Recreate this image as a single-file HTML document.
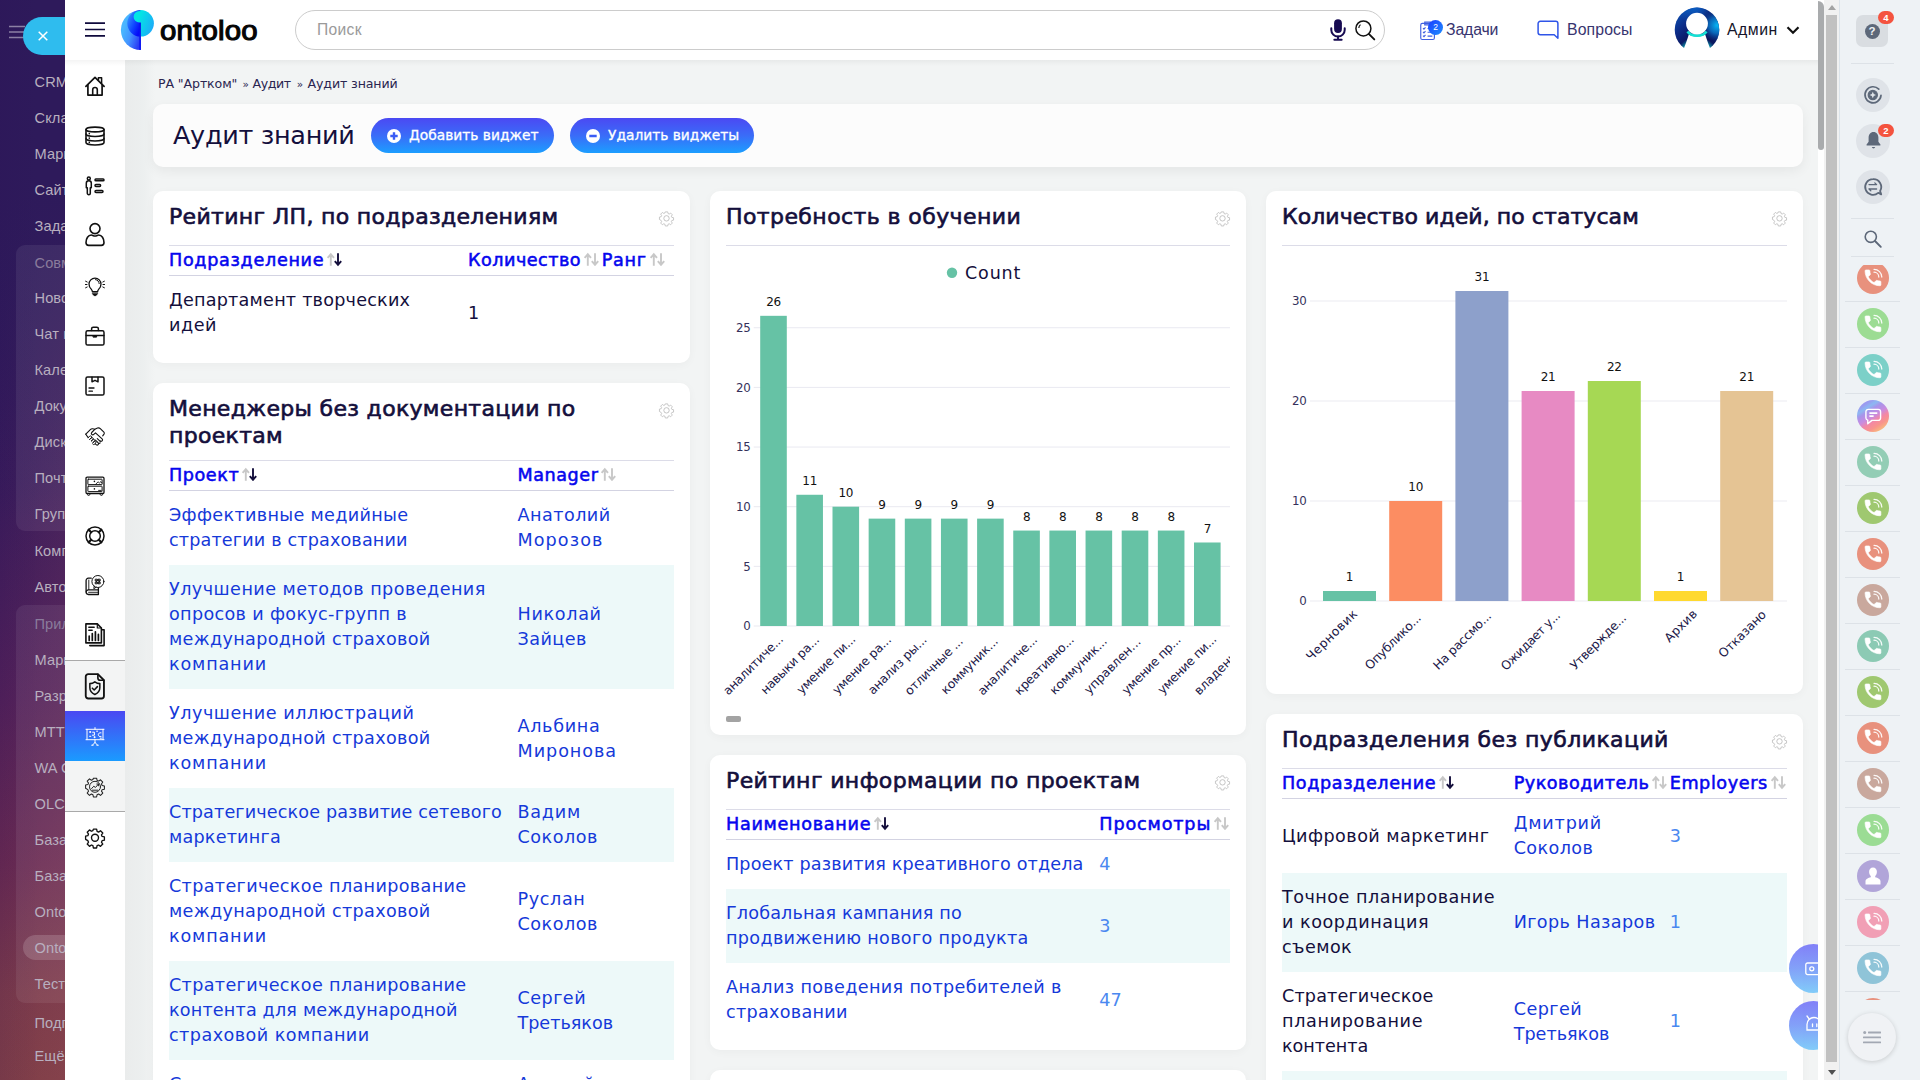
<!DOCTYPE html><html lang="ru"><head><meta charset="utf-8"><title>Аудит знаний</title><style>

*{box-sizing:border-box;margin:0;padding:0}
html,body{width:1920px;height:1080px;overflow:hidden;background:#f2f4f4}
body{font-family:"DejaVu Sans","Liberation Sans",sans-serif;color:#140f3c;position:relative;font-size:17.5px}
.abs{position:absolute}
svg{display:block;overflow:visible}
/* dark sidebar */
#dark{position:absolute;left:0;top:0;width:65px;height:1080px;overflow:hidden;
 background:linear-gradient(180deg,rgba(46,26,91,1) 0%,rgba(46,26,91,1) 18%,rgba(46,26,91,0) 48%),linear-gradient(90deg,rgba(60,20,90,0) 0%,rgba(150,70,90,.05) 45%,rgba(170,90,100,.11) 100%),linear-gradient(180deg,#2e1a5b 0%,#2e1a5b 22%,#3a1c5c 45%,#52215a 65%,#682a52 80%,#7b3b4b 92%,#803f48 100%);
 font-family:"Liberation Sans",sans-serif}
#dark .shade{position:absolute;left:0;top:0;width:65px;height:1080px;background:linear-gradient(90deg,rgba(40,10,80,.10),rgba(255,255,255,.0) 60%)}
#dark .grp{position:absolute;left:16px;width:80px;border-radius:9px;background:rgba(255,255,255,.07)}
#dark .it{position:absolute;left:34.500px;white-space:nowrap;color:#b8afbf;font-size:14.600px;line-height:20px;letter-spacing:.1px}
#dark .it.dim{color:#8a7c9c}
#dark .pill{position:absolute;left:23px;top:17px;width:80px;height:38px;border-radius:19px;background:#2fbcee}
#dark .sel{position:absolute;left:23px;top:935px;width:80px;height:25px;border-radius:13px;background:rgba(255,255,255,.16)}
/* header */
#header{position:absolute;left:65px;top:0;width:1753px;height:60px;background:#fff;z-index:5}
#hshadow{position:absolute;left:65px;top:60px;width:1753px;height:6px;background:linear-gradient(180deg,rgba(0,0,0,.045),rgba(0,0,0,0));z-index:4}
#search{position:absolute;left:230px;top:10px;width:1090px;height:40px;border:1px solid #ccc;border-radius:20px;background:#fff}
#search .ph{position:absolute;left:21px;top:9px;font-family:'Liberation Sans',sans-serif;font-size:15.600px;line-height:20px;color:#9a9a9a}
.hl{position:absolute;top:20px;line-height:20px;font-family:'Liberation Sans',sans-serif;font-size:15.800px;color:#37346f;white-space:nowrap}
/* icon column */
#icons{position:absolute;left:65px;top:60px;width:60px;height:1020px;background:#fff;z-index:3}
#icons .sec{position:absolute;left:0;top:600px;width:60px;height:152px;background:#f3f4f4;border-top:1px solid #a9a9a9;border-bottom:1px solid #a9a9a9}
#icons .act{position:absolute;left:0;top:651px;width:60px;height:50px;background:linear-gradient(180deg,#4a48f2,#1a9bff)}
#icons svg{position:absolute;left:20px;width:20px;height:20px}
/* main */
#main{position:absolute;left:125px;top:60px;width:1693px;height:1020px;background:linear-gradient(90deg,#eaecec 0,#ecefef 18px,#f2f4f4 30px,#f2f4f4 100%);overflow:hidden}
.card{position:absolute;background:#fff;border-radius:10px;box-shadow:0 2px 10px rgba(0,0,0,.035);overflow:hidden}


#right{position:absolute;left:1839px;top:0;width:81px;height:1080px;background:#eef2f5;box-shadow:inset 1px 0 0 #dbe3ea;z-index:7}
#right .sep{position:absolute;height:1px;background:#dde2e7}
#right .badge{position:absolute;width:16px;height:13px;border-radius:6.500px;background:#f4533f;color:#fff;font:bold 9.500px/13.500px "Liberation Sans",sans-serif;text-align:center}
#right .ct{position:absolute;left:18px;width:32px;height:32px;border-radius:16px}
#itrack{position:absolute;left:1818px;top:0;width:6px;height:1080px;background:#fff;z-index:8}
#ithumb{position:absolute;left:1818px;top:1px;width:6px;height:149px;border-radius:0 6px 3px 3px;background:#a9abad;z-index:9}
#otrack{position:absolute;left:1824px;top:0;width:15px;height:1080px;background:#f1f1f1;z-index:8}
#othumb{position:absolute;left:1826px;top:15px;width:11px;height:1047px;background:#c1c1c1;z-index:9}
.fb{position:absolute;left:0;width:49px;height:49px;border-radius:25px;background:linear-gradient(180deg,#7c7af8 0%,#7c9cf8 50%,#7ccaf9 100%);opacity:.95}


.bc{position:absolute;left:0;font-family:'DejaVu Sans',sans-serif;font-size:12.600px;line-height:20px;color:#2a2550;white-space:nowrap}
.bc i{font-style:normal;margin:0 3px;font-size:12px}
.tcard{background:#fcfcfc;box-shadow:0 4px 12px rgba(0,0,0,.06)}
.ptitle{position:absolute;left:20px;top:14px;font-size:25.500px;line-height:34px;white-space:nowrap;color:#140f3c}
.btn{position:absolute;top:14px;height:35px;border-radius:18px;background:linear-gradient(180deg,#4b49f3 0%,#3a6cf8 50%,#1c9eff 100%);color:#fff;white-space:nowrap}
.btn svg{position:absolute;left:16px;top:10.500px}
.btn>span{position:absolute;left:38px;top:7px;font-size:13.800px;line-height:20px;font-family:"DejaVu Sans",sans-serif;-webkit-text-stroke:.3px #fff}
.ctitle{position:absolute;left:16px;top:11.500px;font-family:"DejaVu Sans",sans-serif;font-weight:normal;-webkit-text-stroke:.65px #140f3c;font-size:22px;line-height:27px;white-space:nowrap;color:#140f3c}
.gear{position:absolute;right:16px;top:20px;width:15px;height:15px}
.tbl{position:absolute;left:16px;right:16px;border-top:1px solid #dcdce8}
.thead{position:relative;height:30px;border-bottom:1px solid #d3d3e2}
.th{position:absolute;top:0;height:29px;display:flex;align-items:center;white-space:nowrap;font-family:"DejaVu Sans",sans-serif;font-weight:normal;-webkit-text-stroke:.55px #0606ee;font-size:17.600px;color:#0606ee}
.th>span{position:relative;top:-.5px}
.th .sort{margin-left:3px;margin-top:-2.200px}
.tr{position:relative}
.tr.alt{background:#edf9f9}
.td{position:absolute;top:0;height:100%;display:flex;align-items:center;white-space:nowrap;font-size:17.600px;line-height:25px}
.td>div{position:relative;top:.1px}
.td.dk{color:#140f3c}
.td.lk{color:#1539d9}
.td.nm{color:#4a88f0}

</style></head><body>
<div id="main"></div>
<div class="bc" style="top:73.800px"><span class="abs" style="left:158px"><span style="letter-spacing:-0.12px">РА "Артком"</span></span><span class="abs" style="left:242.500px;font-size:10.500px">»</span><span class="abs" style="left:252.500px"><span style="letter-spacing:-0.41px">Аудит</span></span><span class="abs" style="left:296.700px;font-size:10.500px">»</span><span class="abs" style="left:307.500px"><span style="letter-spacing:-0.12px">Аудит знаний</span></span></div>
<div class="card tcard" style="left:153px;top:104px;width:1650px;height:63px">
<div class="ptitle"><span style="letter-spacing:-0.32px">Аудит знаний</span></div>
<div class="btn" style="left:218px;width:183px"><svg width="14" height="14" viewBox="0 0 14 14"><circle cx="7" cy="7" r="7" fill="#fff"/><path d="M7 3.300v7.400M3.300 7h7.400" stroke="#3a5cf5" stroke-width="2.400"/></svg><span><span>Добавить виджет</span></span></div>
<div class="btn" style="left:417px;width:184px"><svg width="14" height="14" viewBox="0 0 14 14"><circle cx="7" cy="7" r="7" fill="#fff"/><path d="M3.300 7h7.400" stroke="#3a5cf5" stroke-width="2.400"/></svg><span><span>Удалить виджеты</span></span></div>
</div>
<div class="card" style="left:153px;top:191px;width:537px;height:172px"><div class="ctitle"><span style="letter-spacing:0.32px">Рейтинг ЛП, по подразделениям</span></div><svg class="gear" viewBox="0 0 20 20" fill="none" stroke="#b9b9b9" stroke-width="1.100" stroke-linejoin="round"><path d="M8.300 1h3.400l.5 2.400 1.600.7 2-1.400 2.400 2.400-1.400 2 .7 1.600 2.400.5v3.400l-2.400.5-.7 1.600 1.400 2-2.400 2.400-2-1.400-1.600.7-.5 2.400H8.300l-.5-2.400-1.600-.7-2 1.400-2.400-2.400 1.400-2-.7-1.600L.1 11.700V8.300l2.400-.5.7-1.600-1.400-2 2.400-2.400 2 1.400 1.600-.7z" transform="translate(.5 .2) scale(.95)"/><circle cx="10" cy="9.800" r="3.600"/></svg><div class="tbl" style="top:54px"><div class="thead"><div class="th" style="left:0px"><span style="letter-spacing:0.69px">Подразделение</span><svg class="sort" width="15" height="13" viewBox="0 0 15 13" fill="none" stroke-width="1.900"><path d="M3.800 12.800V1.600M.6 4.900 3.800 1.300 7 4.900" stroke="#c8c8c8"/><path d="M11 .2v11.200M7.800 8.100l3.200 3.600 3.200-3.600" stroke="#140f3c"/></svg></div><div class="th" style="left:299px"><span style="letter-spacing:0.49px">Количество</span><svg class="sort" width="15" height="13" viewBox="0 0 15 13" fill="none" stroke-width="1.900"><path d="M3.800 12.800V1.600M.6 4.900 3.800 1.300 7 4.900" stroke="#c8c8c8"/><path d="M11 .2v11.200M7.800 8.100l3.200 3.600 3.200-3.600" stroke="#c8c8c8"/></svg></div><div class="th" style="left:432.7px"><span style="letter-spacing:0.74px">Ранг</span><svg class="sort" width="15" height="13" viewBox="0 0 15 13" fill="none" stroke-width="1.900"><path d="M3.800 12.800V1.600M.6 4.900 3.800 1.300 7 4.900" stroke="#c8c8c8"/><path d="M11 .2v11.200M7.800 8.100l3.200 3.600 3.200-3.600" stroke="#c8c8c8"/></svg></div></div><div class="tr" style="height:74px"><div class="td dk" style="left:0px"><div><span style="letter-spacing:0.22px">Департамент творческих</span><br><span style="letter-spacing:0.55px">идей</span></div></div><div class="td dk" style="left:299px"><div><span style="letter-spacing:0.10px">1</span></div></div><div class="td dk" style="left:432.7px"><div></div></div></div></div></div>
<div class="card" style="left:153px;top:383px;width:537px;height:720px"><div class="ctitle"><span style="letter-spacing:0.32px">Менеджеры без документации по</span><br><span style="letter-spacing:0.30px">проектам</span></div><svg class="gear" viewBox="0 0 20 20" fill="none" stroke="#b9b9b9" stroke-width="1.100" stroke-linejoin="round"><path d="M8.300 1h3.400l.5 2.400 1.600.7 2-1.400 2.400 2.400-1.400 2 .7 1.600 2.400.5v3.400l-2.400.5-.7 1.600 1.400 2-2.400 2.400-2-1.400-1.600.7-.5 2.400H8.300l-.5-2.400-1.600-.7-2 1.400-2.400-2.400 1.400-2-.7-1.600L.1 11.700V8.300l2.400-.5.7-1.600-1.400-2 2.400-2.400 2 1.400 1.600-.7z" transform="translate(.5 .2) scale(.95)"/><circle cx="10" cy="9.800" r="3.600"/></svg><div class="tbl" style="top:77px"><div class="thead"><div class="th" style="left:0px"><span style="letter-spacing:0.57px">Проект</span><svg class="sort" width="15" height="13" viewBox="0 0 15 13" fill="none" stroke-width="1.900"><path d="M3.800 12.800V1.600M.6 4.900 3.800 1.300 7 4.900" stroke="#c8c8c8"/><path d="M11 .2v11.200M7.800 8.100l3.200 3.600 3.200-3.600" stroke="#140f3c"/></svg></div><div class="th" style="left:348.5px"><span style="letter-spacing:0.54px">Manager</span><svg class="sort" width="15" height="13" viewBox="0 0 15 13" fill="none" stroke-width="1.900"><path d="M3.800 12.800V1.600M.6 4.900 3.800 1.300 7 4.900" stroke="#c8c8c8"/><path d="M11 .2v11.200M7.800 8.100l3.200 3.600 3.200-3.600" stroke="#c8c8c8"/></svg></div></div><div class="tr" style="height:74px"><div class="td lk" style="left:0px"><div><span style="letter-spacing:0.32px">Эффективные медийные</span><br><span style="letter-spacing:0.15px">стратегии в страховании</span></div></div><div class="td lk" style="left:348.5px"><div><span style="letter-spacing:0.46px">Анатолий</span><br><span style="letter-spacing:1.08px">Морозов</span></div></div></div><div class="tr alt" style="height:124px"><div class="td lk" style="left:0px"><div><span style="letter-spacing:0.45px">Улучшение методов проведения</span><br><span style="letter-spacing:0.33px">опросов и фокус-групп в</span><br><span style="letter-spacing:0.34px">международной страховой</span><br><span style="letter-spacing:0.83px">компании</span></div></div><div class="td lk" style="left:348.5px"><div><span style="letter-spacing:0.67px">Николай</span><br><span style="letter-spacing:0.42px">Зайцев</span></div></div></div><div class="tr" style="height:99px"><div class="td lk" style="left:0px"><div><span style="letter-spacing:0.52px">Улучшение иллюстраций</span><br><span style="letter-spacing:0.34px">международной страховой</span><br><span style="letter-spacing:0.83px">компании</span></div></div><div class="td lk" style="left:348.5px"><div><span style="letter-spacing:0.67px">Альбина</span><br><span style="letter-spacing:0.95px">Миронова</span></div></div></div><div class="tr alt" style="height:74px"><div class="td lk" style="left:0px"><div><span style="letter-spacing:0.13px">Стратегическое развитие сетевого</span><br><span style="letter-spacing:0.20px">маркетинга</span></div></div><div class="td lk" style="left:348.5px"><div><span style="letter-spacing:0.74px">Вадим</span><br><span style="letter-spacing:0.52px">Соколов</span></div></div></div><div class="tr" style="height:99px"><div class="td lk" style="left:0px"><div><span style="letter-spacing:0.34px">Стратегическое планирование</span><br><span style="letter-spacing:0.34px">международной страховой</span><br><span style="letter-spacing:0.83px">компании</span></div></div><div class="td lk" style="left:348.5px"><div><span style="letter-spacing:0.63px">Руслан</span><br><span style="letter-spacing:0.52px">Соколов</span></div></div></div><div class="tr alt" style="height:99px"><div class="td lk" style="left:0px"><div><span style="letter-spacing:0.34px">Стратегическое планирование</span><br><span style="letter-spacing:0.17px">контента для международной</span><br><span style="letter-spacing:0.45px">страховой компании</span></div></div><div class="td lk" style="left:348.5px"><div><span style="letter-spacing:0.46px">Сергей</span><br><span style="letter-spacing:-0.02px">Третьяков</span></div></div></div><div class="tr" style="height:74px"><div class="td lk" style="left:0px"><div><span style="letter-spacing:0.34px">Стратегическое планирование</span><br><span style="letter-spacing:0.10px">видеопроизводства</span></div></div><div class="td lk" style="left:348.5px"><div><span style="letter-spacing:0.10px">Алексей</span><br><span style="letter-spacing:0.10px">Кузнецов</span></div></div></div></div></div>
<div class="card" style="left:710px;top:755px;width:536px;height:295px"><div class="ctitle"><span style="letter-spacing:0.38px">Рейтинг информации по проектам</span></div><svg class="gear" viewBox="0 0 20 20" fill="none" stroke="#b9b9b9" stroke-width="1.100" stroke-linejoin="round"><path d="M8.300 1h3.400l.5 2.400 1.600.7 2-1.400 2.400 2.400-1.400 2 .7 1.600 2.400.5v3.400l-2.400.5-.7 1.600 1.400 2-2.400 2.400-2-1.400-1.600.7-.5 2.400H8.300l-.5-2.400-1.600-.7-2 1.400-2.400-2.400 1.400-2-.7-1.600L.1 11.700V8.300l2.400-.5.7-1.600-1.400-2 2.400-2.400 2 1.400 1.600-.7z" transform="translate(.5 .2) scale(.95)"/><circle cx="10" cy="9.800" r="3.600"/></svg><div class="tbl" style="top:54px"><div class="thead"><div class="th" style="left:0px"><span style="letter-spacing:0.71px">Наименование</span><svg class="sort" width="15" height="13" viewBox="0 0 15 13" fill="none" stroke-width="1.900"><path d="M3.800 12.800V1.600M.6 4.900 3.800 1.300 7 4.900" stroke="#c8c8c8"/><path d="M11 .2v11.200M7.800 8.100l3.200 3.600 3.200-3.600" stroke="#140f3c"/></svg></div><div class="th" style="left:373.3px"><span style="letter-spacing:0.85px">Просмотры</span><svg class="sort" width="15" height="13" viewBox="0 0 15 13" fill="none" stroke-width="1.900"><path d="M3.800 12.800V1.600M.6 4.900 3.800 1.300 7 4.900" stroke="#c8c8c8"/><path d="M11 .2v11.200M7.800 8.100l3.200 3.600 3.200-3.600" stroke="#c8c8c8"/></svg></div></div><div class="tr" style="height:49px"><div class="td lk" style="left:0px"><div><span style="letter-spacing:0.14px">Проект развития креативного отдела</span></div></div><div class="td nm" style="left:373.3px"><div><span style="letter-spacing:0.10px">4</span></div></div></div><div class="tr alt" style="height:74px"><div class="td lk" style="left:0px"><div><span style="letter-spacing:0.14px">Глобальная кампания по</span><br><span style="letter-spacing:0.32px">продвижению нового продукта</span></div></div><div class="td nm" style="left:373.3px"><div><span style="letter-spacing:0.10px">3</span></div></div></div><div class="tr" style="height:74px"><div class="td lk" style="left:0px"><div><span style="letter-spacing:0.35px">Анализ поведения потребителей в</span><br><span style="letter-spacing:0.28px">страховании</span></div></div><div class="td nm" style="left:373.3px"><div><span style="letter-spacing:0.10px">47</span></div></div></div></div></div>
<div class="card" style="left:710px;top:1070px;width:536px;height:100px"></div>
<div class="card" style="left:1266px;top:714px;width:537px;height:400px"><div class="ctitle"><span style="letter-spacing:0.42px">Подразделения без публикаций</span></div><svg class="gear" viewBox="0 0 20 20" fill="none" stroke="#b9b9b9" stroke-width="1.100" stroke-linejoin="round"><path d="M8.300 1h3.400l.5 2.400 1.600.7 2-1.400 2.400 2.400-1.400 2 .7 1.600 2.400.5v3.400l-2.400.5-.7 1.600 1.400 2-2.400 2.400-2-1.400-1.600.7-.5 2.400H8.300l-.5-2.400-1.600-.7-2 1.400-2.400-2.400 1.400-2-.7-1.600L.1 11.700V8.300l2.400-.5.7-1.600-1.400-2 2.400-2.400 2 1.400 1.600-.7z" transform="translate(.5 .2) scale(.95)"/><circle cx="10" cy="9.800" r="3.600"/></svg><div class="tbl" style="top:54px"><div class="thead"><div class="th" style="left:0px"><span style="letter-spacing:0.61px">Подразделение</span><svg class="sort" width="15" height="13" viewBox="0 0 15 13" fill="none" stroke-width="1.900"><path d="M3.800 12.800V1.600M.6 4.900 3.800 1.300 7 4.900" stroke="#c8c8c8"/><path d="M11 .2v11.200M7.800 8.100l3.200 3.600 3.200-3.600" stroke="#140f3c"/></svg></div><div class="th" style="left:231.7px"><span style="letter-spacing:0.49px">Руководитель</span><svg class="sort" width="15" height="13" viewBox="0 0 15 13" fill="none" stroke-width="1.900"><path d="M3.800 12.800V1.600M.6 4.900 3.800 1.300 7 4.900" stroke="#c8c8c8"/><path d="M11 .2v11.200M7.800 8.100l3.200 3.600 3.200-3.600" stroke="#c8c8c8"/></svg></div><div class="th" style="left:387.7px"><span style="letter-spacing:0.59px">Employers</span><svg class="sort" width="15" height="13" viewBox="0 0 15 13" fill="none" stroke-width="1.900"><path d="M3.800 12.800V1.600M.6 4.900 3.800 1.300 7 4.900" stroke="#c8c8c8"/><path d="M11 .2v11.200M7.800 8.100l3.200 3.600 3.200-3.600" stroke="#c8c8c8"/></svg></div></div><div class="tr" style="height:74px"><div class="td dk" style="left:0px"><div><span style="letter-spacing:0.45px">Цифровой маркетинг</span></div></div><div class="td lk" style="left:231.7px"><div><span style="letter-spacing:0.81px">Дмитрий</span><br><span style="letter-spacing:0.38px">Соколов</span></div></div><div class="td nm" style="left:387.7px"><div><span style="letter-spacing:0.10px">3</span></div></div></div><div class="tr alt" style="height:99px"><div class="td dk" style="left:0px"><div><span style="letter-spacing:0.48px">Точное планирование</span><br><span style="letter-spacing:0.53px">и координация</span><br><span style="letter-spacing:0.42px">съемок</span></div></div><div class="td lk" style="left:231.7px"><div><span style="letter-spacing:0.38px">Игорь Назаров</span></div></div><div class="td nm" style="left:387.7px"><div><span style="letter-spacing:0.10px">1</span></div></div></div><div class="tr" style="height:99px"><div class="td dk" style="left:0px"><div><span style="letter-spacing:0.15px">Стратегическое</span><br><span style="letter-spacing:0.65px">планирование</span><br><span style="letter-spacing:-0.02px">контента</span></div></div><div class="td lk" style="left:231.7px"><div><span style="letter-spacing:0.42px">Сергей</span><br><span style="letter-spacing:-0.01px">Третьяков</span></div></div><div class="td nm" style="left:387.7px"><div><span style="letter-spacing:0.10px">1</span></div></div></div><div class="tr alt" style="height:74px"><div class="td dk" style="left:0px"><div></div></div><div class="td lk" style="left:231.7px"><div></div></div><div class="td nm" style="left:387.7px"><div></div></div></div></div></div>
<div class="card" style="left:710px;top:191px;width:536px;height:544px"><div class="ctitle"><span style="letter-spacing:0.41px">Потребность в обучении</span></div><svg class="gear" viewBox="0 0 20 20" fill="none" stroke="#b9b9b9" stroke-width="1.100" stroke-linejoin="round"><path d="M8.300 1h3.400l.5 2.400 1.600.7 2-1.400 2.400 2.400-1.400 2 .7 1.600 2.400.5v3.400l-2.400.5-.7 1.600 1.400 2-2.400 2.400-2-1.400-1.600.7-.5 2.400H8.300l-.5-2.400-1.600-.7-2 1.400-2.400-2.400 1.400-2-.7-1.600L.1 11.700V8.300l2.400-.5.7-1.600-1.400-2 2.400-2.400 2 1.400 1.600-.7z" transform="translate(.5 .2) scale(.95)"/><circle cx="10" cy="9.800" r="3.600"/></svg><div class="tbl" style="top:54px"></div><svg class="abs" style="left:0;top:0" width="536" height="544" viewBox="710 191 536 544" font-family="DejaVu Sans, Liberation Sans, sans-serif"><defs><clipPath id="c1clip"><rect x="712" y="250" width="518" height="460"/></clipPath></defs><circle cx="952" cy="272.800" r="5.200" fill="#66c2a5"/><text x="965" y="279" font-size="17.500" fill="#140f3c" letter-spacing=".85">Count</text><rect x="753.700" y="625.50" width="476.300" height="1" fill="#e9e9f1"/><text x="750.500" y="630.40" font-size="11.800" text-anchor="end" fill="#34305a" letter-spacing="-.2">0</text><rect x="753.700" y="565.85" width="476.300" height="1" fill="#e9e9f1"/><text x="750.500" y="570.75" font-size="11.800" text-anchor="end" fill="#34305a" letter-spacing="-.2">5</text><rect x="753.700" y="506.20" width="476.300" height="1" fill="#e9e9f1"/><text x="750.500" y="511.10" font-size="11.800" text-anchor="end" fill="#34305a" letter-spacing="-.2">10</text><rect x="753.700" y="446.55" width="476.300" height="1" fill="#e9e9f1"/><text x="750.500" y="451.45" font-size="11.800" text-anchor="end" fill="#34305a" letter-spacing="-.2">15</text><rect x="753.700" y="386.90" width="476.300" height="1" fill="#e9e9f1"/><text x="750.500" y="391.80" font-size="11.800" text-anchor="end" fill="#34305a" letter-spacing="-.2">20</text><rect x="753.700" y="327.25" width="476.300" height="1" fill="#e9e9f1"/><text x="750.500" y="332.15" font-size="11.800" text-anchor="end" fill="#34305a" letter-spacing="-.2">25</text><g clip-path="url(#c1clip)"><rect x="760.20" y="315.82" width="26.600" height="310.18" fill="#66c2a5"/><text x="773.50" y="306.22" font-size="12" text-anchor="middle" fill="#111" letter-spacing="-.3">26</text><text x="784.00" y="640.00" font-size="12.300" text-anchor="end" fill="#1c1848" textLength="78.72" lengthAdjust="spacing" transform="rotate(-45 784.00 640.00)">аналитиче...</text><rect x="796.35" y="494.77" width="26.600" height="131.23" fill="#66c2a5"/><text x="809.65" y="485.17" font-size="12" text-anchor="middle" fill="#111" letter-spacing="-.3">11</text><text x="820.15" y="640.50" font-size="12.300" text-anchor="end" fill="#1c1848" textLength="76.94" lengthAdjust="spacing" transform="rotate(-45 820.15 640.50)">навыки ра...</text><rect x="832.50" y="506.70" width="26.600" height="119.30" fill="#66c2a5"/><text x="845.80" y="497.10" font-size="12" text-anchor="middle" fill="#111" letter-spacing="-.3">10</text><text x="856.30" y="640.00" font-size="12.300" text-anchor="end" fill="#1c1848" textLength="77.30" lengthAdjust="spacing" transform="rotate(-45 856.30 640.00)">умение пи...</text><rect x="868.65" y="518.63" width="26.600" height="107.37" fill="#66c2a5"/><text x="881.95" y="509.03" font-size="12" text-anchor="middle" fill="#111" letter-spacing="-.3">9</text><text x="891.95" y="640.50" font-size="12.300" text-anchor="end" fill="#1c1848" textLength="76.95" lengthAdjust="spacing" transform="rotate(-45 891.95 640.50)">умение ра...</text><rect x="904.80" y="518.63" width="26.600" height="107.37" fill="#66c2a5"/><text x="918.10" y="509.03" font-size="12" text-anchor="middle" fill="#111" letter-spacing="-.3">9</text><text x="927.60" y="640.50" font-size="12.300" text-anchor="end" fill="#1c1848" textLength="77.28" lengthAdjust="spacing" transform="rotate(-45 927.60 640.50)">анализ ры...</text><rect x="940.95" y="518.63" width="26.600" height="107.37" fill="#66c2a5"/><text x="954.25" y="509.03" font-size="12" text-anchor="middle" fill="#111" letter-spacing="-.3">9</text><text x="963.75" y="642.00" font-size="12.300" text-anchor="end" fill="#1c1848" textLength="76.23" lengthAdjust="spacing" transform="rotate(-45 963.75 642.00)">отличные ...</text><rect x="977.10" y="518.63" width="26.600" height="107.37" fill="#66c2a5"/><text x="990.40" y="509.03" font-size="12" text-anchor="middle" fill="#111" letter-spacing="-.3">9</text><text x="998.90" y="642.00" font-size="12.300" text-anchor="end" fill="#1c1848" textLength="74.81" lengthAdjust="spacing" transform="rotate(-45 998.90 642.00)">коммуник...</text><rect x="1013.25" y="530.56" width="26.600" height="95.44" fill="#66c2a5"/><text x="1026.55" y="520.96" font-size="12" text-anchor="middle" fill="#111" letter-spacing="-.3">8</text><text x="1038.05" y="640.50" font-size="12.300" text-anchor="end" fill="#1c1848" textLength="78.35" lengthAdjust="spacing" transform="rotate(-45 1038.05 640.50)">аналитиче...</text><rect x="1049.40" y="530.56" width="26.600" height="95.44" fill="#66c2a5"/><text x="1062.70" y="520.96" font-size="12" text-anchor="middle" fill="#111" letter-spacing="-.3">8</text><text x="1074.70" y="640.50" font-size="12.300" text-anchor="end" fill="#1c1848" textLength="78.00" lengthAdjust="spacing" transform="rotate(-45 1074.70 640.50)">креативно...</text><rect x="1085.55" y="530.56" width="26.600" height="95.44" fill="#66c2a5"/><text x="1098.85" y="520.96" font-size="12" text-anchor="middle" fill="#111" letter-spacing="-.3">8</text><text x="1107.85" y="642.00" font-size="12.300" text-anchor="end" fill="#1c1848" textLength="75.17" lengthAdjust="spacing" transform="rotate(-45 1107.85 642.00)">коммуник...</text><rect x="1121.70" y="530.56" width="26.600" height="95.44" fill="#66c2a5"/><text x="1135.00" y="520.96" font-size="12" text-anchor="middle" fill="#111" letter-spacing="-.3">8</text><text x="1141.50" y="642.50" font-size="12.300" text-anchor="end" fill="#1c1848" textLength="73.76" lengthAdjust="spacing" transform="rotate(-45 1141.50 642.50)">управлен...</text><rect x="1157.85" y="530.56" width="26.600" height="95.44" fill="#66c2a5"/><text x="1171.15" y="520.96" font-size="12" text-anchor="middle" fill="#111" letter-spacing="-.3">8</text><text x="1181.65" y="640.50" font-size="12.300" text-anchor="end" fill="#1c1848" textLength="77.30" lengthAdjust="spacing" transform="rotate(-45 1181.65 640.50)">умение пр...</text><rect x="1194.00" y="542.49" width="26.600" height="83.51" fill="#66c2a5"/><text x="1207.30" y="532.89" font-size="12" text-anchor="middle" fill="#111" letter-spacing="-.3">7</text><text x="1217.30" y="640.00" font-size="12.300" text-anchor="end" fill="#1c1848" textLength="77.30" lengthAdjust="spacing" transform="rotate(-45 1217.30 640.00)">умение пи...</text><text x="1254.45" y="640.50" font-size="12.300" text-anchor="end" fill="#1c1848" textLength="78.00" lengthAdjust="spacing" transform="rotate(-45 1254.45 640.50)">владение ...</text></g><rect x="726" y="716" width="15" height="6" rx="2" fill="#a3a3a3"/></svg></div>
<div class="card" style="left:1266px;top:191px;width:537px;height:503px"><div class="ctitle"><span style="letter-spacing:0.07px">Количество идей, по статусам</span></div><svg class="gear" viewBox="0 0 20 20" fill="none" stroke="#b9b9b9" stroke-width="1.100" stroke-linejoin="round"><path d="M8.300 1h3.400l.5 2.400 1.600.7 2-1.400 2.400 2.400-1.400 2 .7 1.600 2.400.5v3.400l-2.400.5-.7 1.600 1.400 2-2.400 2.400-2-1.400-1.600.7-.5 2.400H8.300l-.5-2.400-1.600-.7-2 1.400-2.400-2.400 1.400-2-.7-1.600L.1 11.700V8.300l2.400-.5.7-1.600-1.400-2 2.400-2.400 2 1.400 1.600-.7z" transform="translate(.5 .2) scale(.95)"/><circle cx="10" cy="9.800" r="3.600"/></svg><div class="tbl" style="top:54px"></div><svg class="abs" style="left:0;top:0" width="537" height="503" viewBox="1266 191 537 503" font-family="DejaVu Sans, Liberation Sans, sans-serif"><rect x="1310" y="600.50" width="477" height="1" fill="#ececf2"/><text x="1306.500" y="605.40" font-size="11.800" text-anchor="end" fill="#34305a" letter-spacing="-.2">0</text><rect x="1310" y="500.50" width="477" height="1" fill="#ececf2"/><text x="1306.500" y="505.40" font-size="11.800" text-anchor="end" fill="#34305a" letter-spacing="-.2">10</text><rect x="1310" y="400.50" width="477" height="1" fill="#ececf2"/><text x="1306.500" y="405.40" font-size="11.800" text-anchor="end" fill="#34305a" letter-spacing="-.2">20</text><rect x="1310" y="300.50" width="477" height="1" fill="#ececf2"/><text x="1306.500" y="305.40" font-size="11.800" text-anchor="end" fill="#34305a" letter-spacing="-.2">30</text><rect x="1323.00" y="591.00" width="53" height="10.00" fill="#66c2a5"/><text x="1349.50" y="581.40" font-size="12" text-anchor="middle" fill="#111" letter-spacing="-.3">1</text><text x="1358.00" y="614.70" font-size="12.300" text-anchor="end" fill="#1c1848" textLength="66.21" lengthAdjust="spacing" transform="rotate(-45 1358.00 614.70)">Черновик</text><rect x="1389.20" y="501.00" width="53" height="100.00" fill="#fc8d62"/><text x="1415.70" y="491.40" font-size="12" text-anchor="middle" fill="#111" letter-spacing="-.3">10</text><text x="1421.90" y="618.70" font-size="12.300" text-anchor="end" fill="#1c1848" textLength="73.33" lengthAdjust="spacing" transform="rotate(-45 1421.90 618.70)">Опублико...</text><rect x="1455.40" y="291.00" width="53" height="310.00" fill="#8da0cb"/><text x="1481.90" y="281.40" font-size="12" text-anchor="middle" fill="#111" letter-spacing="-.3">31</text><text x="1492.10" y="616.70" font-size="12.300" text-anchor="end" fill="#1c1848" textLength="76.09" lengthAdjust="spacing" transform="rotate(-45 1492.10 616.70)">На рассмо...</text><rect x="1521.60" y="391.00" width="53" height="210.00" fill="#e78ac3"/><text x="1548.10" y="381.40" font-size="12" text-anchor="middle" fill="#111" letter-spacing="-.3">21</text><text x="1561.10" y="616.20" font-size="12.300" text-anchor="end" fill="#1c1848" textLength="77.85" lengthAdjust="spacing" transform="rotate(-45 1561.10 616.20)">Ожидает у...</text><rect x="1587.80" y="381.00" width="53" height="220.00" fill="#a6d854"/><text x="1614.30" y="371.40" font-size="12" text-anchor="middle" fill="#111" letter-spacing="-.3">22</text><text x="1627.00" y="618.70" font-size="12.300" text-anchor="end" fill="#1c1848" textLength="73.32" lengthAdjust="spacing" transform="rotate(-45 1627.00 618.70)">Утвержде...</text><rect x="1654.00" y="591.00" width="53" height="10.00" fill="#ffd92f"/><text x="1680.50" y="581.40" font-size="12" text-anchor="middle" fill="#111" letter-spacing="-.3">1</text><text x="1697.80" y="614.70" font-size="12.300" text-anchor="end" fill="#1c1848" textLength="40.08" lengthAdjust="spacing" transform="rotate(-45 1697.80 614.70)">Архив</text><rect x="1720.20" y="391.00" width="53" height="210.00" fill="#e5c494"/><text x="1746.70" y="381.40" font-size="12" text-anchor="middle" fill="#111" letter-spacing="-.3">21</text><text x="1766.90" y="615.30" font-size="12.300" text-anchor="end" fill="#1c1848" textLength="61.21" lengthAdjust="spacing" transform="rotate(-45 1766.90 615.30)">Отказано</text></svg></div>
<div id="dark"><div class="shade"></div>
<div class="grp" style="top:245px;height:286px"></div>
<div class="grp" style="top:605px;height:398px"></div>
<div class="sel"></div>
<div class="it" style="top:71.5px">CRM</div>
<div class="it" style="top:107.5px">Склад</div>
<div class="it" style="top:143.5px">Маркетинг</div>
<div class="it" style="top:179.5px">Сайты</div>
<div class="it" style="top:215.5px">Задачи</div>
<div class="it dim" style="top:252.5px">Совместная работа</div>
<div class="it" style="top:287.5px">Новости</div>
<div class="it" style="top:323.5px">Чат и звонки</div>
<div class="it" style="top:359.5px">Календарь</div>
<div class="it" style="top:395.5px">Документы</div>
<div class="it" style="top:431.5px">Диск</div>
<div class="it" style="top:467.5px">Почта</div>
<div class="it" style="top:503.5px">Группы</div>
<div class="it" style="top:540.5px">Компания</div>
<div class="it" style="top:576.5px">Автоматизация</div>
<div class="it dim" style="top:613.5px">Приложения</div>
<div class="it" style="top:649.5px">Маркет</div>
<div class="it" style="top:685.5px">Разработчикам</div>
<div class="it" style="top:721.5px">МТТ</div>
<div class="it" style="top:757.5px">WA Chat</div>
<div class="it" style="top:793.5px">OLChat</div>
<div class="it" style="top:829.5px">База знаний</div>
<div class="it" style="top:865.5px">База данных</div>
<div class="it" style="top:901.5px">Ontoloo</div>
<div class="it" style="top:937.5px">Ontoloo</div>
<div class="it" style="top:973.5px">Тесты</div>
<div class="it" style="top:1012.5px">Подписка</div>
<div class="it" style="top:1045.5px">Ещё</div>
<svg class="abs" style="left:9px;top:25px" width="16" height="14" viewBox="0 0 16 14"><path d="M0 1.500h16M0 7h16M0 12.500h16" stroke="rgba(255,255,255,.45)" stroke-width="1.600"/></svg>
<div class="pill"><svg class="abs" style="left:15px;top:14px" width="10" height="10" viewBox="0 0 10 10"><path d="M.7.7l8.600 8.600M9.300.7.700 9.300" stroke="#fff" stroke-width="1.500"/></svg></div>
</div>
<div id="hshadow"></div><div id="header">
<svg class="abs" style="left:20px;top:22px" width="20" height="15" viewBox="0 0 20 15"><path d="M0 1.200h20M0 7.500h20M0 13.800h20" stroke="#0f0a3c" stroke-width="1.700"/></svg>
<svg class="abs" style="left:55px;top:9px" width="36" height="42" viewBox="0 0 36 42">
<defs><linearGradient id="lg1" gradientUnits="userSpaceOnUse" x1="2" y1="24" x2="20.800" y2="30"><stop offset="0" stop-color="#49b6ff"/><stop offset=".45" stop-color="#4494ff"/><stop offset="1" stop-color="#2a3af4"/></linearGradient>
<linearGradient id="lg2" gradientUnits="userSpaceOnUse" x1="7.500" y1="12" x2="20.800" y2="18"><stop offset="0" stop-color="#2a80ff"/><stop offset=".55" stop-color="#0a3cff"/><stop offset="1" stop-color="#0206f8"/></linearGradient>
<linearGradient id="lg3" gradientUnits="userSpaceOnUse" x1="18" y1="10" x2="34" y2="16"><stop offset="0" stop-color="#02e6e4"/><stop offset="1" stop-color="#1cacf8"/></linearGradient>
<clipPath id="lcl"><rect x="0" y="0" width="20.800" height="42"/></clipPath><clipPath id="lcr"><rect x="20.300" y="0" width="16" height="42"/></clipPath></defs>
<circle cx="20.800" cy="21.100" r="19.900" fill="url(#lg1)" clip-path="url(#lcl)"/>
<circle cx="20.600" cy="14.300" r="13.300" fill="url(#lg2)" clip-path="url(#lcl)" opacity=".93"/>
<circle cx="20.600" cy="14.300" r="13.300" fill="url(#lg3)" clip-path="url(#lcr)"/>
<rect x="19.300" y="13.500" width="1.600" height="27.400" fill="#0a14f2"/>
<circle cx="19.300" cy="7.800" r="5.700" fill="url(#lg3)"/>
</svg>
<div class="abs" style="left:94.500px;top:10.700px;font-family:'Liberation Sans',sans-serif;font-size:27px;line-height:40px;color:#050505;-webkit-text-stroke:1.100px #050505;transform:scaleX(1.09);transform-origin:0 0;white-space:nowrap"><span style="letter-spacing:0.16px">ontoloo</span></div>
<div id="search"><div class="ph"><span style="letter-spacing:0.34px">Поиск</span></div></div>
<svg class="abs" style="left:1265px;top:19px" width="16" height="22" viewBox="0 0 16 22"><rect x="4.100" y=".3" width="7.800" height="13.700" rx="3.900" fill="#170b52"/><path d="M1.300 9.300v1.600a6.700 6.700 0 0 0 13.400 0V9.300" fill="none" stroke="#170b52" stroke-width="2" stroke-linecap="round"/><path d="M8 17.500v3.200M4.300 20.700h7.400" fill="none" stroke="#170b52" stroke-width="1.900" stroke-linecap="round"/></svg>
<svg class="abs" style="left:1290px;top:20px" width="21" height="21" viewBox="0 0 21 21"><circle cx="8.400" cy="8.400" r="7.500" fill="none" stroke="#111" stroke-width="1.500"/><path d="M13.800 13.900l5.500 5.500" stroke="#111" stroke-width="1.900" stroke-linecap="round"/><path d="M3.800 8a4.800 4.800 0 0 1 1.700-3.400" fill="none" stroke="#111" stroke-width="1.200"/></svg>
<svg class="abs" style="left:1355px;top:20px" width="18" height="21" viewBox="0 0 19 21" fill="none" stroke="#3f5fe0" stroke-width="1.200"><rect x=".8" y="3" width="14.400" height="17" rx="1.600"/><path d="M5 3V1.600h6V3M5 3v1.600h6V3"/><path d="M3.200 8l1 1 1.600-1.800M3.200 12l1 1 1.600-1.800M3.200 16l1 1 1.600-1.800M8 8.400h5M8 12.400h5M8 16.400h5"/></svg>
<div class="abs" style="left:1363.100px;top:19.700px;width:15px;height:15px;border-radius:8px;background:linear-gradient(135deg,#1a3cff,#1f8fff);color:#fff;font:8.500px/15px 'Liberation Sans',sans-serif;text-align:center">2</div>
<div class="hl" style="left:1381px;"><span style="letter-spacing:-0.13px">Задачи</span></div>
<svg class="abs" style="left:1472px;top:20px" width="22" height="20" viewBox="0 0 22 20" fill="none" stroke="#2f55e8" stroke-width="1.500" stroke-linejoin="round"><path d="M3.300 1.300h15.400c1.200 0 2.200 1 2.200 2.200v14.700l-3.700-3.400H3.300c-1.200 0-2.200-1-2.200-2.200V3.500c0-1.200 1-2.200 2.200-2.200z"/></svg>
<div class="hl" style="left:1502px;"><span style="letter-spacing:0.12px">Вопросы</span></div>
<svg class="abs" style="left:1608.500px;top:7px" width="46" height="46" viewBox="0 0 46 46"><defs>
<linearGradient id="av0" x1="0" y1="0" x2="1" y2="1"><stop offset="0" stop-color="#0b5cc0"/><stop offset=".3" stop-color="#0c2c88"/><stop offset=".55" stop-color="#0a1258"/><stop offset="1" stop-color="#0b1c66"/></linearGradient>
<radialGradient id="av1" cx=".95" cy=".4" r=".36"><stop offset="0" stop-color="#06b6f4"/><stop offset=".5" stop-color="#0a8ae0" stop-opacity=".7"/><stop offset="1" stop-color="#0a5cc0" stop-opacity="0"/></radialGradient>
<radialGradient id="av2b" cx=".5" cy=".5" r=".5"><stop offset="0" stop-color="#12e6d2"/><stop offset=".62" stop-color="#12e0d0" stop-opacity=".95"/><stop offset="1" stop-color="#10b0c0" stop-opacity="0"/></radialGradient><radialGradient id="av2" cx=".5" cy="1" r=".5"><stop offset="0" stop-color="#12e6d2"/><stop offset=".7" stop-color="#12d8cc" stop-opacity=".75"/><stop offset="1" stop-color="#12c0c0" stop-opacity="0"/></radialGradient>
<radialGradient id="av3" cx=".45" cy="-.05" r=".42"><stop offset="0" stop-color="#0a62c8"/><stop offset="1" stop-color="#0a66cc" stop-opacity="0"/></radialGradient>
<clipPath id="avc"><circle cx="23" cy="22.800" r="22.300"/></clipPath></defs>
<circle cx="23" cy="22.800" r="22.300" fill="url(#av0)"/>
<circle cx="23" cy="22.800" r="22.300" fill="url(#av3)"/>
<circle cx="23" cy="22.800" r="22.300" fill="url(#av1)"/>
<g clip-path="url(#avc)"><ellipse cx="23" cy="46" rx="20" ry="16" fill="url(#av2b)"/></g>
<path d="M14.800 27.400C13 33 11 38.500 9.500 42.500L8 46h30l-1.500-3.500C35 38.500 33 33 31.200 27.400 27 29.800 19 29.800 14.800 27.400z" fill="#fff"/>
<path d="M13.500 24.500c3.500 5.500 15.500 5.500 19 0" fill="none" stroke="#14e0d4" stroke-width="2.600"/>
<circle cx="23" cy="16.600" r="10.900" fill="#fff"/></svg>
<div class="hl" style="left:1662px;color:#15152a;"><span style="letter-spacing:0.53px">Админ</span></div>
<svg class="abs" style="left:1721px;top:26px" width="14" height="9" viewBox="0 0 14 9"><path d="M1.500 1.300 7 6.800l5.500-5.500" fill="none" stroke="#111" stroke-width="2.200"/></svg>
</div>
<div id="icons"><div class="sec"></div><div class="act"></div>
<svg viewBox="0 0 20 20" style="top:15.6px;color:#111" fill="none" stroke="currentColor" stroke-width="1.5" stroke-linecap="round" stroke-linejoin="round" ><path d="M.9 10.400 10 1.300l9.100 9.100" stroke-width="1.700"/><path d="M2.900 8.800v10.300h14.200V8.800" stroke-width="1.700"/><path d="M13.400 4.400V1.700h3.200v5.900" stroke-width="1.500"/><path d="M7.700 18.800v-5a2.300 2.300 0 0 1 4.600 0v5" stroke-width="1.600"/></svg>
<svg viewBox="0 0 20 20" style="top:65.6px;color:#111" fill="none" stroke="currentColor" stroke-width="1.5" stroke-linecap="round" stroke-linejoin="round" ><ellipse cx="10" cy="3.500" rx="9" ry="2.400" stroke-width="1.600"/><path d="M1 3.500v13c0 1.400 4 2.500 9 2.500s9-1.100 9-2.500v-13" stroke-width="1.600"/><path d="M1 8c0 1.400 4 2.500 9 2.500S19 9.400 19 8M1 12.500C1 13.900 5 15 10 15s9-1.100 9-2.500" stroke-width="1.500"/><path d="M4.300 7.600v.1M4.300 12.100v.1M4.300 16.400v.1" stroke-width="1.600"/></svg>
<svg viewBox="0 0 20 20" style="top:115.6px;color:#111" fill="none" stroke="currentColor" stroke-width="1.5" stroke-linecap="round" stroke-linejoin="round" ><circle cx="3.800" cy="2.600" r="1.500"/><path d="M1.300 7.200a2.500 2.500 0 0 1 5 0v4.600h-1v5.400a1.500 1.500 0 0 1-3 0v-5.400h-1z"/><rect x="10" y="3" width="9" height="1.800" rx=".9"/><rect x="10" y="8.600" width="5.600" height="1.800" rx=".9"/><rect x="10" y="14.400" width="8" height="2" rx="1"/></svg>
<svg viewBox="0 0 20 24" style="top:163.4px;height:24px;color:#111" fill="none" stroke="currentColor" stroke-width="1.500" stroke-linecap="round" stroke-linejoin="round"><circle cx="10" cy="5.600" r="5" stroke-width="1.600"/><path d="M1 19.600c0-4.300 2.200-7.600 5.300-7.600 1.100 0 2.100 1 3.700 1s2.600-1 3.700-1c3.100 0 5.300 3.300 5.300 7.600 0 1.800-1.100 2.800-2.700 2.800H3.700C2.100 22.400 1 21.400 1 19.600z" stroke-width="1.600"/></svg>
<svg viewBox="0 0 20 20" style="top:215.6px;color:#111" fill="none" stroke="currentColor" stroke-width="1.5" stroke-linecap="round" stroke-linejoin="round" ><path d="M6.500 13.600C4.900 12.300 4 10.400 4 8.100a6 6 0 0 1 12 0c0 2.300-.9 4.200-2.500 5.500-.5.500-.8 1.200-.8 2H7.300c0-.8-.3-1.500-.8-2z" stroke-width="1.300"/><path d="M7.400 17.100h5.200M8.100 18.600h3.800" stroke-width="1.300"/><path d="M9.200 19.600h1.600" stroke-width="1"/><path d="M10.500 3.600c2.100.3 3.500 1.900 3.700 4" stroke-width="1"/><path d="M.6 5.200l1.600.8M.4 8.500H2M.6 11.800l1.600-.8M19.400 5.200l-1.600.8M19.600 8.500H18M19.400 11.800l-1.600-.8" stroke-width="1"/></svg>
<svg viewBox="0 0 20 20" style="top:265.6px;color:#111" fill="none" stroke="currentColor" stroke-width="1.5" stroke-linecap="round" stroke-linejoin="round" ><rect x="1" y="4.800" width="18" height="14.200" rx="1.600"/><path d="M6.600 4.600V2.800c0-.9.700-1.600 1.600-1.600h3.600c.9 0 1.600.7 1.600 1.600v1.800"/><path d="M1.200 9.600h17.600"/><path d="M8.400 9.800h3.200v1.300H8.400z" fill="currentColor" stroke-width="1"/></svg>
<svg viewBox="0 0 20 20" style="top:315.6px;color:#111" fill="none" stroke="currentColor" stroke-width="1.5" stroke-linecap="round" stroke-linejoin="round" ><rect x="1" y="1" width="18" height="18" rx="1.600"/><path d="M7 1.200v4.600l3-1.500 3 1.500V1.200"/><path d="M4 12h5M4 15.200h3.400" stroke-width="1.300"/></svg>
<svg viewBox="0 0 20 20" style="top:365.6px;color:#111" fill="none" stroke="currentColor" stroke-width="1.5" stroke-linecap="round" stroke-linejoin="round" ><path d="M.8 8.200 5.600 3.400c.6-.6 1.300-.8 2.100-.6l2.100.5 2.700-1.200c1-.4 2-.2 2.800.5l3.600 3.600c.5.500.5 1.300.1 1.900l-1.300 1.800" stroke-width="1.100"/><path d="M.8 8.200l2.400 3.400" stroke-width="1.100"/><path d="M9.800 3.300 6.700 6.500c-.5.600-.5 1.400.1 1.900.6.500 1.400.5 2-.1l1.700-1.500 6.600 6c.6.600.6 1.500 0 2-.5.500-1.400.5-1.900 0" stroke-width="1.100"/><path d="M15.200 16.800c-.5.500-1.400.6-2 0l-1.300-1.200M13.200 16.800c.5.600.5 1.400-.1 1.900-.5.500-1.300.5-1.900 0l-1-.9M12.300 12.600l2.900 2.700M10.400 14.200l2.200 2" stroke-width="1.100"/><path d="M3.200 11.600l1.600-1.400c.5-.4 1.200-.4 1.600.1.400.5.400 1.200-.1 1.600L4.700 13.300M4.700 13.300l1.700-1.400M6.400 11.900c.5-.4 1.200-.4 1.600.1.400.5.400 1.200-.1 1.600l-1.600 1.400M6.300 15l1.600-1.400c.5-.4 1.200-.4 1.600.1.400.5.400 1.200-.1 1.600l-1.600 1.400M7.800 16.700l1.200-1c.5-.4 1.200-.4 1.600.1.400.5.400 1.200-.1 1.600l-1.100.9c-.5.400-1.200.4-1.600-.1" stroke-width="1"/></svg>
<svg viewBox="0 0 20 20" style="top:415.6px;color:#111" fill="none" stroke="currentColor" stroke-width="1.5" stroke-linecap="round" stroke-linejoin="round" ><rect x="1" y="1.200" width="18" height="16.300" rx="1.200" stroke-width="1.300"/><rect x="2.900" y="3.200" width="14.200" height="5.400" rx=".4" stroke-width="1"/><rect x="2.900" y="10.200" width="14.200" height="5.400" rx=".4" stroke-width="1"/><path d="M2.400 17.600v.9c0 .5.400.8.800.8h.8c.5 0 .8-.3.800-.8v-.9M15.200 17.600v.9c0 .5.400.8.800.8h.8c.5 0 .8-.3.800-.8v-.9" stroke-width="1"/><circle cx="9.400" cy="5.400" r=".8" fill="currentColor" stroke="none"/><circle cx="9.400" cy="12.900" r=".8" fill="currentColor" stroke="none"/><path d="M10.600 8.300l2.500-2.500 1.300 1.200 1.500-1.400 1.100 1.300" stroke-width=".9"/><path d="M13.600 14.400h2.600" stroke-width=".9"/></svg>
<svg viewBox="0 0 20 20" style="top:465.6px;color:#111" fill="none" stroke="currentColor" stroke-width="1.5" stroke-linecap="round" stroke-linejoin="round" ><circle cx="10" cy="10" r="9"/><circle cx="10" cy="10" r="5.300"/><path d="M3.700 3.700l2.500 2.500M16.300 3.700l-2.500 2.500M3.700 16.300l2.500-2.500M16.300 16.300l-2.500-2.500" stroke-width="2.200"/></svg>
<svg viewBox="0 0 20 21" style="top:515.0px;height:21px;color:#111" fill="none" stroke="currentColor" stroke-width="1.500" stroke-linecap="round" stroke-linejoin="round"><path d="M6.200 3.200H3.400c-1.300 0-2.300 1-2.300 2.300v11.600c0 1.400 1 2.400 2.300 2.400h10V12.800" stroke-width="1.300"/><path d="M1.200 17c0-1.200 1-2.100 2.200-2.100h9.800" stroke-width="1.100"/><path d="M3.600 17.300h9.600" stroke-width=".9"/><path d="M3.800 5v9.600" stroke-width=".9"/><circle cx="12.900" cy="6.500" r="6" stroke-width="1" fill="#fff"/><path d="M10.600 4.200h1.700v1.700h-1.700zM13.500 4.200h1.700v1.700h-1.700zM10.600 7.100h1.700v1.700h-1.700zM13.500 7.100h1.700v1.700h-1.700z" stroke-width="1"/><path d="M12.300 5h1.200M12.300 8h1.200M11.400 5.900v1.200M14.400 5.900v1.200" stroke-width="1"/><path d="M9.200 11.200l-.4 2.500 2.300-1.400" stroke-width="1"/></svg>
<svg viewBox="0 0 20 24" style="top:563.4px;height:24px;color:#111" fill="none" stroke="currentColor" stroke-width="1.500" stroke-linecap="round" stroke-linejoin="round"><path d="M.9.900h11.400l4.100 4.100V19.900H.9z" stroke-width="1.600" fill="#fff"/><path d="M12.300.9v4.100h4.100" stroke-width="1.200"/><path d="M4.800 22.600h14.300V6.700h-2.400" stroke-width="1.600"/><path d="M3.800 4.300h5.400M3.800 7.200h3.400" stroke-width="1.400"/><path d="M4.200 17.500V13M7.300 17.500V10.600M10.400 17.500V8.800M13.400 17.500V11.400" stroke-width="1.700"/></svg>
<svg viewBox="0 0 20 24" style="top:613px;height:26px;width:21.700px;left:18.700px;color:#111" fill="none" stroke="currentColor" stroke-linecap="round" stroke-linejoin="round"><path d="M1.600 3.400c0-1.300 1-2.300 2.300-2.300h8.900l5.600 5.600v14.500c0 1.300-1 2.300-2.300 2.300H3.900c-1.300 0-2.300-1-2.300-2.300z" stroke-width="1.700"/><path d="M12.800 1.200v3.400c0 1.200.9 2.100 2.100 2.100h3.400" stroke-width="1.500"/><path d="M10 8.200c1.500 1.100 3 1.600 4.600 1.600v3.800c0 2.900-1.600 4.900-4.600 6.200-3-1.300-4.600-3.300-4.600-6.200V9.800c1.600 0 3.100-.5 4.600-1.600z" stroke-width="1.400"/><path d="M7.700 14l1.700 1.700 3-3.100" stroke-width="1.400"/></svg>
<svg viewBox="0 0 20 20" style="top:666px;color:#fff" fill="none" stroke="currentColor" stroke-width="1.5" stroke-linecap="round" stroke-linejoin="round" ><path d="M1 3.300h18M1 13.700h18M2 3.300v10.400M18 3.300v10.400M10 1.600v1.700M10 13.700v2.800M10 16.500l-2.600 2.700M10 16.500l2.600 2.700M8.200 19.200h-1.400M11.800 19.200h1.400" stroke-width="1"/><path d="M4.600 6h1.200M5.200 5.400v1.200M11.600 5.200h1M4.600 10.300h1.200M9 11.200h1.200M9.600 10.600v1.200M15.200 12.200h1.200" stroke-width="1"/><path d="M7.600 6.200h1.800v3h-2M16 6.800c-1.600-.3-2.700.6-2.700 1.900 0 1.300 1.100 2.200 2.700 1.900" stroke-width="1"/></svg>
<svg viewBox="0 0 20 20" style="top:717px;color:#222" fill="none" stroke="currentColor" stroke-width="1.5" stroke-linecap="round" stroke-linejoin="round" ><path d="M8.300 1h3.400l.5 2.400 1.600.7 2-1.400 2.400 2.400-1.400 2 .7 1.600 2.400.5v3.400l-2.400.5-.7 1.600 1.400 2-2.400 2.400-2-1.400-1.600.7-.5 2.400H8.300l-.5-2.400-1.600-.7-2 1.400-2.400-2.400 1.400-2-.7-1.600L.1 11.700V8.300l2.400-.5.7-1.600-1.400-2 2.400-2.400 2 1.400 1.600-.7z" stroke-width="1.100" transform="translate(.5 .2) scale(.95)"/><circle cx="10" cy="9.800" r="5.500" stroke-width="1"/><path d="M6.600 11.600l2.200-2.400 1.600 1.300 3-3.300M11.800 7h1.800v1.800" stroke-width="1"/><path d="M7.200 13.200h5.600" stroke-width="1"/></svg>
<svg viewBox="0 0 20 20" style="top:768px;color:#111" fill="none" stroke="currentColor" stroke-width="1.5" stroke-linecap="round" stroke-linejoin="round" ><path d="M8.300 1h3.400l.5 2.400 1.600.7 2-1.400 2.400 2.400-1.400 2 .7 1.600 2.400.5v3.400l-2.400.5-.7 1.600 1.400 2-2.400 2.400-2-1.400-1.600.7-.5 2.400H8.300l-.5-2.400-1.600-.7-2 1.400-2.400-2.400 1.400-2-.7-1.600L.1 11.700V8.300l2.400-.5.7-1.600-1.400-2 2.400-2.400 2 1.400 1.600-.7z" stroke-width="1.400" transform="translate(.5 .2) scale(.95)"/><circle cx="10" cy="9.800" r="3.500" stroke-width="1.400"/></svg>
</div>
<div id="right">
<div class="abs" style="left:17px;top:15px;width:32px;height:32px;border-radius:7px;background:#d9dde1"></div>
<div class="abs" style="left:25.500px;top:23.500px;width:15px;height:15px;border-radius:8px;background:#5d6879;color:#eef2f5;font:bold 11.500px/15px 'Liberation Sans',sans-serif;text-align:center">?</div>
<div class="badge" style="left:39px;top:11px">4</div>
<div class="sep" style="left:12px;width:43px;top:63px"></div>
<div class="sep" style="left:12px;width:43px;top:218px"></div>
<div class="sep" style="left:12px;width:43px;top:256px"></div>
<div class="abs" style="left:17px;top:78px;width:34px;height:34px;border-radius:17px;background:#dfe3e8"></div>
<div class="abs" style="left:17px;top:124px;width:34px;height:34px;border-radius:17px;background:#dfe3e8"></div>
<div class="abs" style="left:17px;top:170px;width:34px;height:34px;border-radius:17px;background:#dfe3e8"></div>
<svg class="abs" style="left:24.500px;top:86px" width="18" height="18" viewBox="0 0 18 18" fill="none" stroke="#5d6879" stroke-width="1.700" stroke-linecap="round"><path d="M14.800 3.200A8 8 0 1 0 17 9.400"/><circle cx="8.800" cy="9" r="4.600" fill="#5d6879" stroke-width="1.200"/><path d="M8.800 5.800l1 2.200 2.200 1-2.200 1-1 2.200-1-2.200-2.200-1 2.200-1z" fill="#dfe3e8" stroke="none"/></svg>
<svg class="abs" style="left:27px;top:132px" width="15" height="17" viewBox="0 0 15 17"><path d="M7.500 0C4.400 0 2.600 2.500 2.600 5.600v4.200L.6 12.400c-.3.400 0 1 .5 1h12.800c.5 0 .8-.6.500-1l-2-2.600V5.600C12.400 2.500 10.600 0 7.500 0z" fill="#5d6879"/><path d="M5.800 15h3.400c-.3.900-.9 1.400-1.700 1.400S6.100 15.900 5.800 15z" fill="#5d6879"/></svg>
<div class="badge" style="left:39px;top:124px">2</div>
<svg class="abs" style="left:25px;top:178px" width="19" height="19" viewBox="0 0 19 19" fill="none" stroke="#5d6879" stroke-width="1.800" stroke-linecap="round" stroke-linejoin="round"><path d="M9 1.200a7.800 7.800 0 1 0 5.200 13.600l3 1.600-1.100-3.400A7.800 7.800 0 0 0 9 1.200z"/><path d="M5 6.600h7.600M10.800 4.900 12.600 6.600M5 11h7.600M6.800 12.700 5 11" stroke-width="1.300"/></svg>
<svg class="abs" style="left:25px;top:229.500px" width="18" height="18" viewBox="0 0 18 18" fill="none" stroke="#5d6879" stroke-width="1.600" stroke-linecap="round"><circle cx="6.800" cy="6.800" r="5.600"/><path d="M11 11l5.800 5.800" stroke-width="1.900"/></svg>
<div class="abs" style="left:0;top:265px;width:81px;height:735px;overflow:hidden">
<div class="ct" style="top:-3px;background:#e8917d"><svg style="position:absolute;left:0;top:0" width="32" height="32" viewBox="0 0 32 32"><path transform="translate(5.400 5.300) scale(.88)" d="M6.620 10.790c1.440 2.830 3.760 5.140 6.590 6.590l2.200-2.200c.27-.27.67-.36 1.020-.24 1.120.37 2.330.57 3.570.57.55 0 1 .45 1 1V20c0 .55-.45 1-1 1-9.390 0-17-7.610-17-17 0-.55.45-1 1-1h3.500c.55 0 1 .45 1 1 0 1.250.2 2.450.57 3.570.11.35.03.74-.25 1.020l-2.200 2.200z" fill="#fff" stroke="#fff" stroke-width=".7" stroke-linejoin="round"/><path d="M17 10.200a4.900 4.900 0 0 1 4.800 4.900M17 7.300a7.800 7.800 0 0 1 7.800 7.800" fill="none" stroke="#fff" stroke-width="1.250" stroke-linecap="round" opacity=".92"/></svg></div>
<div class="sep" style="left:6px;width:55px;top:36px"></div>
<div class="ct" style="top:43px;background:#9cdc93"><svg style="position:absolute;left:0;top:0" width="32" height="32" viewBox="0 0 32 32"><path transform="translate(5.400 5.300) scale(.88)" d="M6.620 10.790c1.440 2.830 3.760 5.140 6.590 6.590l2.200-2.200c.27-.27.67-.36 1.020-.24 1.120.37 2.330.57 3.570.57.55 0 1 .45 1 1V20c0 .55-.45 1-1 1-9.390 0-17-7.610-17-17 0-.55.45-1 1-1h3.500c.55 0 1 .45 1 1 0 1.250.2 2.450.57 3.570.11.35.03.74-.25 1.020l-2.200 2.200z" fill="#fff" stroke="#fff" stroke-width=".7" stroke-linejoin="round"/><path d="M17 10.200a4.900 4.900 0 0 1 4.800 4.900M17 7.300a7.800 7.800 0 0 1 7.800 7.800" fill="none" stroke="#fff" stroke-width="1.250" stroke-linecap="round" opacity=".92"/></svg></div>
<div class="sep" style="left:6px;width:55px;top:82px"></div>
<div class="ct" style="top:89px;background:#7cd0c8"><svg style="position:absolute;left:0;top:0" width="32" height="32" viewBox="0 0 32 32"><path transform="translate(5.400 5.300) scale(.88)" d="M6.620 10.790c1.440 2.830 3.760 5.140 6.590 6.590l2.200-2.200c.27-.27.67-.36 1.020-.24 1.120.37 2.330.57 3.570.57.55 0 1 .45 1 1V20c0 .55-.45 1-1 1-9.390 0-17-7.610-17-17 0-.55.45-1 1-1h3.500c.55 0 1 .45 1 1 0 1.250.2 2.450.57 3.570.11.35.03.74-.25 1.020l-2.200 2.200z" fill="#fff" stroke="#fff" stroke-width=".7" stroke-linejoin="round"/><path d="M17 10.200a4.900 4.900 0 0 1 4.800 4.900M17 7.300a7.800 7.800 0 0 1 7.800 7.800" fill="none" stroke="#fff" stroke-width="1.250" stroke-linecap="round" opacity=".92"/></svg></div>
<div class="sep" style="left:6px;width:55px;top:128px"></div>
<div class="ct" style="top:135px;background:linear-gradient(148deg,#a08cf0 0%,#9a9cf0 18%,#8cb8f2 27%,#a894ea 36%,#c88ce0 50%,#f488a4 62%,#f8948c 74%,#f8b880 86%,#f8c878 100%)"><svg style="position:absolute;left:8px;top:7.500px" width="16.500" height="17" viewBox="0 0 18 18" fill="none" stroke="#fff" stroke-width="1.500" stroke-linejoin="round"><path d="M3.500 1.200h11a2.500 2.500 0 0 1 2.500 2.500v7a2.500 2.500 0 0 1-2.500 2.500H7.500l-4.500 3.800V13A2.500 2.500 0 0 1 1 10.700v-7a2.500 2.500 0 0 1 2.500-2.500z"/><path d="M4.800 5.200h8.600M4.800 8.600h4.600" stroke-width="1.900"/></svg></div>
<div class="sep" style="left:6px;width:55px;top:174px"></div>
<div class="ct" style="top:181px;background:#93cdb5"><svg style="position:absolute;left:0;top:0" width="32" height="32" viewBox="0 0 32 32"><path transform="translate(5.400 5.300) scale(.88)" d="M6.620 10.790c1.440 2.830 3.760 5.140 6.590 6.590l2.200-2.200c.27-.27.67-.36 1.020-.24 1.120.37 2.330.57 3.570.57.55 0 1 .45 1 1V20c0 .55-.45 1-1 1-9.390 0-17-7.610-17-17 0-.55.45-1 1-1h3.500c.55 0 1 .45 1 1 0 1.250.2 2.450.57 3.570.11.35.03.74-.25 1.020l-2.200 2.200z" fill="#fff" stroke="#fff" stroke-width=".7" stroke-linejoin="round"/><path d="M17 10.200a4.900 4.900 0 0 1 4.800 4.900M17 7.300a7.800 7.800 0 0 1 7.800 7.800" fill="none" stroke="#fff" stroke-width="1.250" stroke-linecap="round" opacity=".92"/></svg></div>
<div class="sep" style="left:6px;width:55px;top:220px"></div>
<div class="ct" style="top:227px;background:#9fc870"><svg style="position:absolute;left:0;top:0" width="32" height="32" viewBox="0 0 32 32"><path transform="translate(5.400 5.300) scale(.88)" d="M6.620 10.790c1.440 2.830 3.760 5.140 6.590 6.590l2.200-2.200c.27-.27.67-.36 1.020-.24 1.120.37 2.330.57 3.570.57.55 0 1 .45 1 1V20c0 .55-.45 1-1 1-9.390 0-17-7.610-17-17 0-.55.45-1 1-1h3.500c.55 0 1 .45 1 1 0 1.250.2 2.450.57 3.570.11.35.03.74-.25 1.020l-2.200 2.200z" fill="#fff" stroke="#fff" stroke-width=".7" stroke-linejoin="round"/><path d="M17 10.200a4.900 4.900 0 0 1 4.800 4.900M17 7.300a7.800 7.800 0 0 1 7.800 7.800" fill="none" stroke="#fff" stroke-width="1.250" stroke-linecap="round" opacity=".92"/></svg></div>
<div class="sep" style="left:6px;width:55px;top:266px"></div>
<div class="ct" style="top:273px;background:#e8917d"><svg style="position:absolute;left:0;top:0" width="32" height="32" viewBox="0 0 32 32"><path transform="translate(5.400 5.300) scale(.88)" d="M6.620 10.790c1.440 2.830 3.760 5.140 6.590 6.590l2.200-2.200c.27-.27.67-.36 1.020-.24 1.120.37 2.330.57 3.570.57.55 0 1 .45 1 1V20c0 .55-.45 1-1 1-9.390 0-17-7.610-17-17 0-.55.45-1 1-1h3.500c.55 0 1 .45 1 1 0 1.250.2 2.450.57 3.570.11.35.03.74-.25 1.020l-2.200 2.200z" fill="#fff" stroke="#fff" stroke-width=".7" stroke-linejoin="round"/><path d="M17 10.200a4.900 4.900 0 0 1 4.800 4.900M17 7.300a7.800 7.800 0 0 1 7.800 7.800" fill="none" stroke="#fff" stroke-width="1.250" stroke-linecap="round" opacity=".92"/></svg></div>
<div class="sep" style="left:6px;width:55px;top:312px"></div>
<div class="ct" style="top:319px;background:#c9a89d"><svg style="position:absolute;left:0;top:0" width="32" height="32" viewBox="0 0 32 32"><path transform="translate(5.400 5.300) scale(.88)" d="M6.620 10.790c1.440 2.830 3.760 5.140 6.590 6.590l2.200-2.200c.27-.27.67-.36 1.020-.24 1.120.37 2.330.57 3.570.57.55 0 1 .45 1 1V20c0 .55-.45 1-1 1-9.390 0-17-7.610-17-17 0-.55.45-1 1-1h3.500c.55 0 1 .45 1 1 0 1.250.2 2.450.57 3.570.11.35.03.74-.25 1.020l-2.200 2.200z" fill="#fff" stroke="#fff" stroke-width=".7" stroke-linejoin="round"/><path d="M17 10.200a4.900 4.900 0 0 1 4.800 4.900M17 7.300a7.800 7.800 0 0 1 7.800 7.800" fill="none" stroke="#fff" stroke-width="1.250" stroke-linecap="round" opacity=".92"/></svg></div>
<div class="sep" style="left:6px;width:55px;top:358px"></div>
<div class="ct" style="top:365px;background:#8ccab4"><svg style="position:absolute;left:0;top:0" width="32" height="32" viewBox="0 0 32 32"><path transform="translate(5.400 5.300) scale(.88)" d="M6.620 10.790c1.440 2.830 3.760 5.140 6.590 6.590l2.200-2.200c.27-.27.67-.36 1.020-.24 1.120.37 2.330.57 3.570.57.55 0 1 .45 1 1V20c0 .55-.45 1-1 1-9.390 0-17-7.610-17-17 0-.55.45-1 1-1h3.500c.55 0 1 .45 1 1 0 1.250.2 2.450.57 3.570.11.35.03.74-.25 1.020l-2.200 2.200z" fill="#fff" stroke="#fff" stroke-width=".7" stroke-linejoin="round"/><path d="M17 10.200a4.900 4.900 0 0 1 4.800 4.900M17 7.300a7.800 7.800 0 0 1 7.800 7.800" fill="none" stroke="#fff" stroke-width="1.250" stroke-linecap="round" opacity=".92"/></svg></div>
<div class="sep" style="left:6px;width:55px;top:404px"></div>
<div class="ct" style="top:411px;background:#9fc870"><svg style="position:absolute;left:0;top:0" width="32" height="32" viewBox="0 0 32 32"><path transform="translate(5.400 5.300) scale(.88)" d="M6.620 10.790c1.440 2.830 3.760 5.140 6.590 6.590l2.200-2.200c.27-.27.67-.36 1.020-.24 1.120.37 2.330.57 3.570.57.55 0 1 .45 1 1V20c0 .55-.45 1-1 1-9.390 0-17-7.610-17-17 0-.55.45-1 1-1h3.500c.55 0 1 .45 1 1 0 1.250.2 2.450.57 3.570.11.35.03.74-.25 1.020l-2.200 2.200z" fill="#fff" stroke="#fff" stroke-width=".7" stroke-linejoin="round"/><path d="M17 10.200a4.900 4.900 0 0 1 4.800 4.900M17 7.300a7.800 7.800 0 0 1 7.800 7.800" fill="none" stroke="#fff" stroke-width="1.250" stroke-linecap="round" opacity=".92"/></svg></div>
<div class="sep" style="left:6px;width:55px;top:450px"></div>
<div class="ct" style="top:457px;background:#e8917d"><svg style="position:absolute;left:0;top:0" width="32" height="32" viewBox="0 0 32 32"><path transform="translate(5.400 5.300) scale(.88)" d="M6.620 10.790c1.440 2.830 3.760 5.140 6.590 6.590l2.200-2.200c.27-.27.67-.36 1.020-.24 1.120.37 2.330.57 3.570.57.55 0 1 .45 1 1V20c0 .55-.45 1-1 1-9.390 0-17-7.610-17-17 0-.55.45-1 1-1h3.500c.55 0 1 .45 1 1 0 1.250.2 2.450.57 3.570.11.35.03.74-.25 1.020l-2.200 2.200z" fill="#fff" stroke="#fff" stroke-width=".7" stroke-linejoin="round"/><path d="M17 10.200a4.900 4.900 0 0 1 4.800 4.900M17 7.300a7.800 7.800 0 0 1 7.800 7.800" fill="none" stroke="#fff" stroke-width="1.250" stroke-linecap="round" opacity=".92"/></svg></div>
<div class="sep" style="left:6px;width:55px;top:496px"></div>
<div class="ct" style="top:503px;background:#c9a89d"><svg style="position:absolute;left:0;top:0" width="32" height="32" viewBox="0 0 32 32"><path transform="translate(5.400 5.300) scale(.88)" d="M6.620 10.790c1.440 2.830 3.760 5.140 6.590 6.590l2.200-2.200c.27-.27.67-.36 1.020-.24 1.120.37 2.330.57 3.570.57.55 0 1 .45 1 1V20c0 .55-.45 1-1 1-9.390 0-17-7.610-17-17 0-.55.45-1 1-1h3.500c.55 0 1 .45 1 1 0 1.250.2 2.450.57 3.570.11.35.03.74-.25 1.020l-2.200 2.200z" fill="#fff" stroke="#fff" stroke-width=".7" stroke-linejoin="round"/><path d="M17 10.200a4.900 4.900 0 0 1 4.800 4.900M17 7.300a7.800 7.800 0 0 1 7.800 7.800" fill="none" stroke="#fff" stroke-width="1.250" stroke-linecap="round" opacity=".92"/></svg></div>
<div class="sep" style="left:6px;width:55px;top:542px"></div>
<div class="ct" style="top:549px;background:#9bdc94"><svg style="position:absolute;left:0;top:0" width="32" height="32" viewBox="0 0 32 32"><path transform="translate(5.400 5.300) scale(.88)" d="M6.620 10.790c1.440 2.830 3.760 5.140 6.590 6.590l2.200-2.200c.27-.27.67-.36 1.020-.24 1.120.37 2.330.57 3.570.57.55 0 1 .45 1 1V20c0 .55-.45 1-1 1-9.390 0-17-7.610-17-17 0-.55.45-1 1-1h3.500c.55 0 1 .45 1 1 0 1.250.2 2.450.57 3.570.11.35.03.74-.25 1.020l-2.200 2.200z" fill="#fff" stroke="#fff" stroke-width=".7" stroke-linejoin="round"/><path d="M17 10.200a4.900 4.900 0 0 1 4.800 4.900M17 7.300a7.800 7.800 0 0 1 7.800 7.800" fill="none" stroke="#fff" stroke-width="1.250" stroke-linecap="round" opacity=".92"/></svg></div>
<div class="sep" style="left:6px;width:55px;top:588px"></div>
<div class="ct" style="top:595px;background:#b1a5d9"><svg style="position:absolute;left:8px;top:7px" width="16" height="18" viewBox="0 0 16 18"><path d="M8 .5c2.300 0 3.900 1.700 3.900 4.200 0 1.700-.7 3.300-1.700 4.200v1.300c2.600.7 5.300 1.700 5.300 4.100V17.500H.5v-3.200c0-2.400 2.700-3.400 5.300-4.100V8.900c-1-.9-1.700-2.500-1.700-4.200C4.100 2.200 5.700.5 8 .5z" fill="#fff"/></svg></div>
<div class="sep" style="left:6px;width:55px;top:634px"></div>
<div class="ct" style="top:641px;background:#f19fb5"><svg style="position:absolute;left:0;top:0" width="32" height="32" viewBox="0 0 32 32"><path transform="translate(5.400 5.300) scale(.88)" d="M6.620 10.790c1.440 2.830 3.760 5.140 6.590 6.590l2.200-2.200c.27-.27.67-.36 1.020-.24 1.120.37 2.330.57 3.570.57.55 0 1 .45 1 1V20c0 .55-.45 1-1 1-9.390 0-17-7.610-17-17 0-.55.45-1 1-1h3.500c.55 0 1 .45 1 1 0 1.250.2 2.450.57 3.570.11.35.03.74-.25 1.020l-2.200 2.200z" fill="#fff" stroke="#fff" stroke-width=".7" stroke-linejoin="round"/><path d="M17 10.200a4.900 4.900 0 0 1 4.800 4.900M17 7.300a7.800 7.800 0 0 1 7.800 7.800" fill="none" stroke="#fff" stroke-width="1.250" stroke-linecap="round" opacity=".92"/></svg></div>
<div class="sep" style="left:6px;width:55px;top:680px"></div>
<div class="ct" style="top:687px;background:#8fc4d8"><svg style="position:absolute;left:0;top:0" width="32" height="32" viewBox="0 0 32 32"><path transform="translate(5.400 5.300) scale(.88)" d="M6.620 10.790c1.440 2.830 3.760 5.140 6.590 6.590l2.200-2.200c.27-.27.67-.36 1.020-.24 1.120.37 2.330.57 3.570.57.55 0 1 .45 1 1V20c0 .55-.45 1-1 1-9.390 0-17-7.610-17-17 0-.55.45-1 1-1h3.500c.55 0 1 .45 1 1 0 1.250.2 2.450.57 3.570.11.35.03.74-.25 1.020l-2.200 2.200z" fill="#fff" stroke="#fff" stroke-width=".7" stroke-linejoin="round"/><path d="M17 10.200a4.900 4.900 0 0 1 4.800 4.900M17 7.300a7.800 7.800 0 0 1 7.800 7.800" fill="none" stroke="#fff" stroke-width="1.250" stroke-linecap="round" opacity=".92"/></svg></div>
<div class="sep" style="left:6px;width:55px;top:726px"></div>
<div class="ct" style="top:733px;background:#e8917d"><svg style="position:absolute;left:0;top:0" width="32" height="32" viewBox="0 0 32 32"><path transform="translate(5.400 5.300) scale(.88)" d="M6.620 10.790c1.440 2.830 3.760 5.140 6.590 6.590l2.200-2.200c.27-.27.67-.36 1.020-.24 1.120.37 2.330.57 3.570.57.55 0 1 .45 1 1V20c0 .55-.45 1-1 1-9.390 0-17-7.610-17-17 0-.55.45-1 1-1h3.500c.55 0 1 .45 1 1 0 1.250.2 2.450.57 3.570.11.35.03.74-.25 1.020l-2.200 2.200z" fill="#fff" stroke="#fff" stroke-width=".7" stroke-linejoin="round"/><path d="M17 10.200a4.900 4.900 0 0 1 4.800 4.900M17 7.300a7.800 7.800 0 0 1 7.800 7.800" fill="none" stroke="#fff" stroke-width="1.250" stroke-linecap="round" opacity=".92"/></svg></div>
<div class="sep" style="left:6px;width:55px;top:772px"></div>
</div>
<div class="abs" style="left:9px;top:1013px;width:48px;height:48px;border-radius:24px;background:#f0f2f5;box-shadow:0 1px 5px rgba(0,0,0,.16)"></div>
<svg class="abs" style="left:24px;top:1029.600px" width="18" height="14" viewBox="0 0 18 14" fill="#a2a8b3"><circle cx="1.700" cy="2.400" r="1.500"/><rect x="5" y="1.600" width="13" height="1.800" rx=".4"/><rect x="0" y="6.500" width="18" height="1.800" rx=".4"/><rect x="0" y="11.500" width="18" height="1.800" rx=".4"/></svg>
</div>
<div id="itrack"></div><div id="ithumb"></div>
<div id="otrack"></div><div id="othumb"></div>
<svg class="abs" style="left:1828px;top:5px;z-index:9" width="8" height="5" viewBox="0 0 8 5"><path d="M4 0l4 5H0z" fill="#a3a3a3"/></svg>
<svg class="abs" style="left:1828px;top:1070px;z-index:9" width="8" height="5" viewBox="0 0 8 5"><path d="M0 0h8L4 5z" fill="#505050"/></svg>
<div class="abs" style="left:1789px;top:944px;width:29px;height:110px;overflow:hidden;z-index:6">
<div class="fb" style="top:0"></div><div class="fb" style="top:57px"></div>
<svg class="abs" style="left:16px;top:17px" width="16" height="16" viewBox="0 0 16 16" fill="none" stroke="#fff" stroke-width="1.300"><rect x=".8" y="2" width="14.400" height="11.600" rx="1.800"/><circle cx="6.800" cy="7.800" r="2"/></svg>
<svg class="abs" style="left:17px;top:71px" width="18" height="16" viewBox="0 0 18 16" fill="none" stroke="#fff" stroke-width="1.300" stroke-linecap="round"><path d="M1 15V9.500a7 7 0 0 1 14 0V15z"/><path d="M1 1l2.200 3M6.500 9v2.500M10.800 9v2.500"/></svg>
</div>
</body></html>
